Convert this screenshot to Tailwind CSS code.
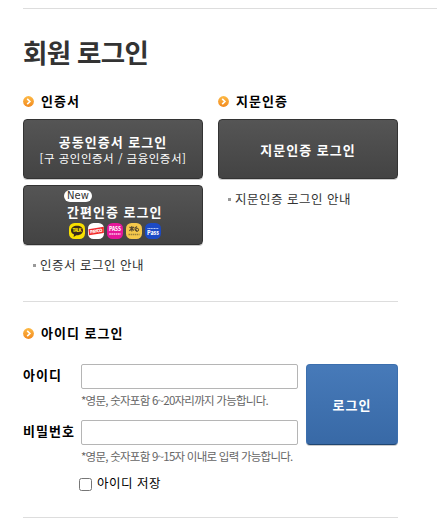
<!DOCTYPE html>
<html lang="ko">
<head>
  <meta charset="UTF-8">
  <meta name="viewport" content="width=device-width, initial-scale=1.0">
  <title>회원 로그인</title>
  <script src="https://cdn.jsdelivr.net/npm/@tailwindcss/browser@4"></script>
</head>
<body class="h-[532px] overflow-hidden bg-white pl-[23px] pt-2 font-['Noto_Sans_CJK_KR',sans-serif] whitespace-nowrap text-black">
  <div class="h-px bg-[#dddddd]"></div>
  <h1 class="mt-[23px] h-10 text-[26.5px] leading-10 font-bold tracking-[-0.7px] text-[#333333]">회원 로그인</h1>

  <div class="mt-[19px] flex w-[375px] gap-[15px]">
    <!-- Certificate -->
    <section class="w-[180px]">
      <h2 class="flex h-5 items-center text-[13px] leading-5 font-bold tracking-[1px]">
        <svg class="mr-[7px] size-[11px]" viewBox="0 0 11 11">
          <defs>
            <linearGradient id="orange" x1="0" y1="0" x2="0" y2="1">
              <stop offset="0" stop-color="#fdb944"/>
              <stop offset="1" stop-color="#f28a20"/>
            </linearGradient>
          </defs>
          <circle cx="5.5" cy="5.5" r="5.4" fill="url(#orange)"/>
          <path d="M4.2 2.9 6.9 5.5 4.2 8.1" fill="none" stroke="#fff" stroke-width="1.6"/>
        </svg>인증서
      </h2>
      <button class="mt-2 flex h-[60px] w-full flex-col items-center rounded border border-[#333333] bg-linear-to-b from-[#555555] to-[#434343] pt-[13px] text-white shadow-[0_1px_0_#cccccc]">
        <span class="h-[17px] text-[13px] leading-[17px] font-bold tracking-[1px]">공동인증서 로그인</span>
        <span class="h-[17px] text-[11.5px] leading-[17px] tracking-[0.5px]">[구 공인인증서 / 금융인증서]</span>
      </button>
      <button class="mt-[6px] flex h-[60px] w-full flex-col items-start rounded border border-[#333333] bg-linear-to-b from-[#555555] to-[#434343] pt-1 pl-10 text-white shadow-[0_1px_0_#cccccc]">
        <span class="flex h-[12px] w-7 items-center justify-center rounded-full bg-white font-['DejaVu_Sans','Noto_Sans_CJK_KR',sans-serif] text-[10px] leading-[12px] text-[#333333]">New</span>
        <span class="ml-[3px] mt-px h-[18px] text-[13px] leading-[18px] font-bold tracking-[1px]">간편인증 로그인</span>
        <span class="ml-[5px] mt-[2px] flex gap-[3px]">
          <svg class="size-4" viewBox="0 0 16 16">
            <rect width="16" height="16" rx="5.5" fill="#f9e000"/>
            <path d="M8 2.8c-3.5 0-6 2-6 4.7 0 1.8 1.2 3.3 3 4.1l-.4 2.5 2.7-1.9c4 .3 6.7-1.9 6.7-4.7S11.5 2.8 8 2.8z" fill="#3a2a1c"/>
            <text x="8" y="9.2" text-anchor="middle" textLength="9" font-size="4.3" font-weight="900" letter-spacing="0" fill="#f9e000">TALK</text>
          </svg>
          <svg class="size-4" viewBox="0 0 16 16">
            <rect width="16" height="16" rx="5.5" fill="#fff"/>
            <path d="M.5 6.2 15.8 3.8V9.900L1 12.300z" fill="#f12a2b"/>
            <text x="8.300" y="9.700" text-anchor="middle" textLength="12.500" font-size="4.300" font-weight="900" fill="#fff" transform="rotate(-8 8 8)">PAYCO</text>
          </svg>
          <svg class="size-4" viewBox="0 0 16 16">
            <rect width="16" height="16" rx="5.5" fill="#e6169a"/>
            <text x="8" y="8" text-anchor="middle" textLength="12" lengthAdjust="spacingAndGlyphs" font-size="5.5" font-weight="900" fill="#fff">PASS</text>
            <path d="M2.2 11h11.500" stroke="#fcc3e8" stroke-width="1.500" stroke-dasharray="1.700 .5"/>
          </svg>
          <svg class="size-4" viewBox="0 0 16 16">
            <rect width="16" height="16" rx="5.5" fill="#f5c84b"/>
            <path d="M3.5 4 8 7.500M5.800 3v5.500M3.300 7.800 8 4M8.500 5.500l2.500-2M8.500 5.500 11 8" stroke="#5b4b30" stroke-width="1.100"/>
            <circle cx="11" cy="6.800" r="1.600" fill="none" stroke="#5b4b30"/>
            <path d="M2.500 11.500h11" stroke="#9b803d" stroke-width="1.300" stroke-dasharray="1.500 .6"/>
          </svg>
          <svg class="size-4" viewBox="0 0 16 16">
            <rect width="16" height="16" rx="5.5" fill="#1c4ac5"/>
            <path d="M2.500 5.500h11" stroke="#b8c9f5" stroke-width="1.200" stroke-dasharray="1.200 .4"/>
            <text x="8" y="11.500" text-anchor="middle" textLength="12" lengthAdjust="spacingAndGlyphs" font-size="6" font-weight="900" fill="#fff">Pass</text>
          </svg>
        </span>
      </button>
      <p class="mt-[10px] flex h-5 items-center pl-[10px] text-[12.5px] leading-5 tracking-[0.5px] text-[#333333]">
        <i class="mr-1 size-[3px] bg-[#999999]"></i>인증서 로그인 안내
      </p>
    </section>

    <!-- Fingerprint -->
    <section class="w-[180px]">
      <h2 class="flex h-5 items-center text-[13px] leading-5 font-bold tracking-[1px]">
        <svg class="mr-[7px] size-[11px]" viewBox="0 0 11 11">
          <circle cx="5.5" cy="5.5" r="5.4" fill="url(#orange)"/>
          <path d="M4.2 2.9 6.9 5.5 4.2 8.1" fill="none" stroke="#fff" stroke-width="1.6"/>
        </svg>지문인증
      </h2>
      <button class="mt-2 flex h-[60px] w-full items-center justify-center rounded border border-[#333333] bg-linear-to-b from-[#555555] to-[#434343] pt-px text-[13px] font-bold tracking-[1px] text-white shadow-[0_1px_0_#cccccc]">지문인증 로그인</button>
      <p class="mt-[10px] flex h-5 items-center pl-[10px] text-[12.5px] leading-5 tracking-[0.5px] text-[#333333]">
        <i class="mr-1 size-[3px] bg-[#999999]"></i>지문인증 로그인 안내
      </p>
    </section>
  </div>

  <!-- ID login -->
  <section class="mt-[26px] w-[375px] border-y border-[#dddddd] pt-[21px] pb-6">
    <h2 class="flex h-5 items-center text-[13px] leading-5 font-bold tracking-[1px]">
      <svg class="mr-[7px] size-[11px]" viewBox="0 0 11 11">
        <circle cx="5.5" cy="5.5" r="5.4" fill="url(#orange)"/>
        <path d="M4.2 2.9 6.9 5.5 4.2 8.1" fill="none" stroke="#fff" stroke-width="1.6"/>
      </svg>아이디 로그인
    </h2>
    <form class="mt-[21px]">
      <div class="flex h-[109px] items-start justify-between">
        <div class="w-[275px]">
          <div class="flex h-[56px]">
            <label for="user-id" class="w-[58px] shrink-0 pt-px text-[13px] leading-5 font-bold tracking-[1px]">아이디</label>
            <div>
              <input id="user-id" type="text" class="block h-[25px] w-[217px] rounded-[2px] border border-[#b5b5b5] bg-white">
              <p class="mt-[1px] h-5 text-[11.5px] leading-5 tracking-[-0.75px] text-[#666666]">*영문, 숫자포함 6~20자리까지 가능합니다.</p>
            </div>
          </div>
          <div class="flex h-[53px]">
            <label for="user-pw" class="w-[58px] shrink-0 pt-px text-[13px] leading-5 font-bold tracking-[1px]">비밀번호</label>
            <div>
              <input id="user-pw" type="password" class="block h-[25px] w-[217px] rounded-[2px] border border-[#b5b5b5] bg-white">
              <p class="mt-[1px] h-5 text-[11.5px] leading-5 tracking-[-0.75px] text-[#666666]">*영문, 숫자포함 9~15자 이내로 입력 가능합니다.</p>
            </div>
          </div>
        </div>
        <button type="submit" class="h-[81px] w-[92px] rounded border border-[#3c6fae] border-b-[#1f4571] bg-linear-to-b from-[#477ab9] to-[#3869a6] text-[13px] font-bold tracking-[1px] text-white shadow-[0_1px_0_#cccccc]">로그인</button>
      </div>
      <label class="flex h-5 items-start pl-[56px] text-[12.5px] leading-5 tracking-[0.5px]">
        <input type="checkbox" class="mt-[5px] mr-[5px] size-[13px] appearance-none rounded-[2.5px] border border-[#767676] bg-white">아이디 저장
      </label>
    </form>
  </section>
</body>
</html>
